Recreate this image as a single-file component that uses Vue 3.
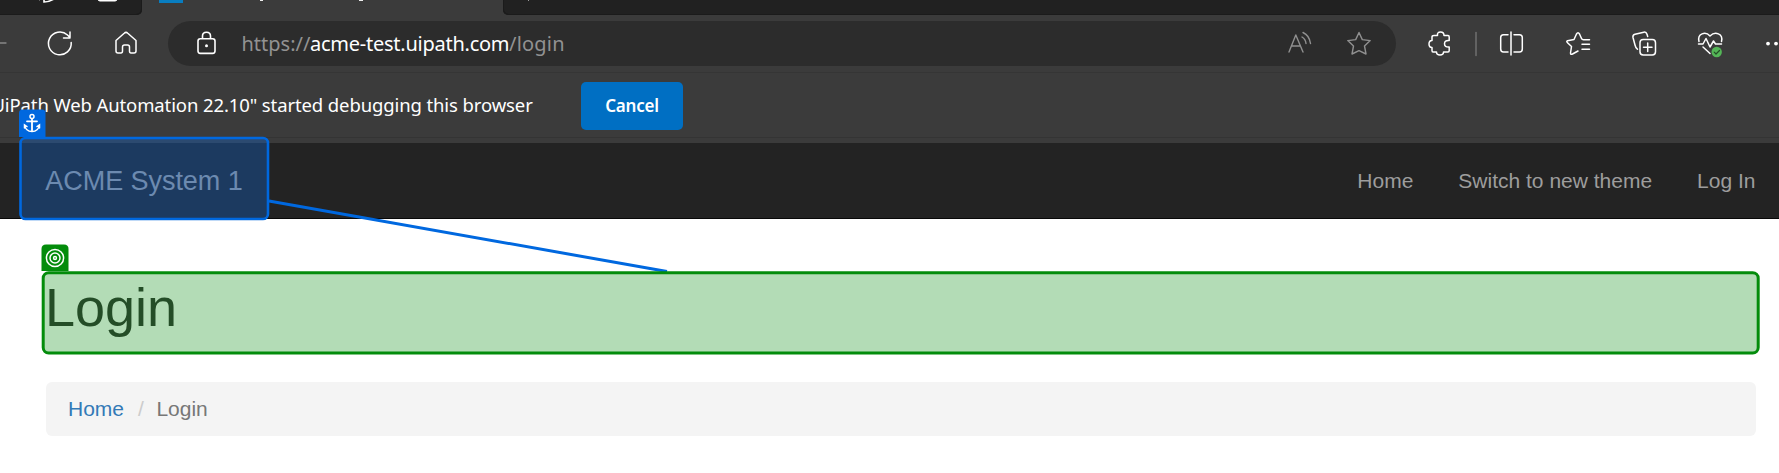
<script setup>
const links = ['Home', 'Switch to new theme', 'Log In']
</script>

<template>
  <div class="screen">
    <header class="chrome">
      <div class="tabs">
        <div class="tabs-left">
          <svg width="142" height="15" viewBox="0 0 142 15">
            <path d="M44 0V2Q49 2 54-1M39-1l1 1" fill="none" stroke="#fff" stroke-width="1.6" />
            <path d="M98-1Q98 1 100 1H115Q117 1 117-1" fill="#fff" stroke="#fff" />
          </svg>
        </div>
        <div class="tab-active">
          <span class="favicon"></span>
          <svg class="tab-title" width="180" height="4" viewBox="183 0 180 4">
            <path d="M260 .5H263M359 .5H365" fill="none" stroke="#eee" stroke-width="1" />
          </svg>
        </div>
        <div class="tabs-right">
          <svg width="60" height="4" viewBox="503 0 60 4"><path d="M528.500 0V1" stroke="#999" /></svg>
        </div>
      </div>
      <div class="toolbar">
        <svg class="tools" width="168" height="57" viewBox="0 15 168 57" fill="none" stroke="#fff" stroke-width="1.5" stroke-linecap="round" stroke-linejoin="round">
          <path d="M-3 43H6" stroke="#888" stroke-width="1.300" />
          <path d="M71.200 42.500A11.400 11.400 0 1 1 67.500 35L70 37.500M70 32V38H63.500" />
          <path d="M116 40.500L124.200 33.200Q126 31.500 127.800 33.200L136 40.500V51Q136 53 134 53H131Q129.500 53 129.500 51V47Q129.500 45 127.500 45H124.500Q122.500 45 122.500 47V51Q122.500 53 121 53H118Q116 53 116 51Z" />
        </svg>
        <div class="address">
          <svg class="lock" width="20" height="24" viewBox="0 0 20 24" fill="none" stroke="#fff" stroke-width="1.6">
            <rect x="2" y="7.800" width="17" height="14.600" rx="2.300" />
            <path d="M6.500 8V5Q6.500 1.300 10.500 1.300T14.500 5V8" /><circle cx="10.500" cy="14.800" r="1.500" fill="#fff" stroke="none" />
          </svg>
          <div class="url"><span class="scheme">https://</span><span class="host">acme-test.uipath.com</span><span class="path">/login</span></div>
          <svg class="address-tools" width="90" height="45" viewBox="1285 21 90 45" fill="none" stroke="#909090" stroke-width="1.400" stroke-linecap="round" stroke-linejoin="round">
            <path d="M1289 52L1295.800 35L1303 52M1291.500 46H1300.500M1302 37Q1305.500 39 1306 43.500M1303 32.500Q1309.500 35.500 1310.500 43.500" />
            <path d="M1359 32.500L1362.300 39.600L1370.200 40.600L1364.500 46L1366 54L1359 50.600L1352 54L1353.500 46L1347.800 40.600L1355.700 39.600Z" />
          </svg>
        </div>
        <svg class="actions" width="383" height="57" viewBox="1396 15 383 57" fill="none" stroke="#fff" stroke-width="1.500" stroke-linecap="round" stroke-linejoin="round">
          <path d="M1434 35.500H1437.500Q1437 32 1440.500 32T1444 35.500H1448Q1449.200 35.500 1449.200 37V40.500Q1444.500 40 1444.500 43.700T1449.200 47V50.500Q1449.200 52 1448 52H1443.500Q1443.500 55 1440 55T1436.500 52H1433Q1432 52 1432 50.500V47.500Q1429 47.500 1429 44T1432 40.500V37Q1432 35.500 1434 35.500Z" />
          <path d="M1476 32.500V55.500" stroke="#707070" />
          <path d="M1508 34.700H1503.500Q1500.700 34.700 1500.700 37.500V49Q1500.700 52 1503.500 52H1508M1514 34.700H1519.500Q1522.300 34.700 1522.300 37.500V49Q1522.300 52 1519.500 52H1514M1511 32V55" />
          <path d="M1589.500 39.700H1583.500Q1582 39.700 1581.500 38.500L1579.500 34Q1578 31.500 1576.500 34L1574 39.500L1567.500 40.700Q1566 41.500 1567.500 42.700L1571.500 46.500L1570.500 53Q1570.500 55 1572.500 54L1578 51M1582 44.300H1589.500M1582 49.200H1589.500" />
          <rect x="1640" y="39.500" width="15.500" height="15.500" rx="3.200" /><path d="M1647.700 43V51.500M1643.500 47.300H1652M1647.700 36.500L1647 34.200Q1646.200 31.700 1643.800 32.200L1635 34.300Q1632.500 35 1633 37.500L1635 45Q1635.800 48.500 1637.500 49.300" />
          <path d="M1699 41.500C1697 33.500 1705.500 31 1710 36C1715 31 1723.500 33.500 1721.500 41.500M1698.500 44H1703L1706 38.500L1710 47L1713.500 41L1715.500 44H1721.500M1703 47L1710 53.500" />
          <circle cx="1716.700" cy="52" r="5.200" fill="#54b657" stroke="none" /><path d="M1714.200 52.200L1716 54L1719.500 50.500" stroke="#244e26" stroke-width="1.200" />
          <g fill="#fff" stroke="none"><circle cx="1768" cy="43.600" r="1.900" /><circle cx="1776" cy="43.600" r="1.900" /></g>
        </svg>
      </div>
      <div class="infobar">
        <div class="message">"UiPath Web Automation 22.10" started debugging this browser</div>
        <button class="cancel">Cancel</button>
      </div>
      <div class="chrome-edge"></div>
    </header>

    <nav class="navbar">
      <a class="brand">ACME System 1</a>
      <div class="links"><a v-for="link in links" :key="link">{{ link }}</a></div>
    </nav>

    <main>
      <h1>Login</h1>
      <div class="breadcrumb"><a>Home</a><span class="slash">/</span><span class="current">Login</span></div>
    </main>

    <svg class="highlights" width="1779" height="473" viewBox="0 0 1779 473">
      <path d="M19 137V113Q19 109.500 22.500 109.500H42Q45.500 109.500 45.500 113V137Z" fill="#0068df" />
      <g fill="none" stroke="#fff" stroke-width="1.500" stroke-linecap="round">
        <circle cx="32" cy="116.500" r="2" /><path d="M32 119V131M27 121.300H37" stroke-width="1.800" /><path d="M24.800 125Q25.500 131.500 32 131.500T39.200 125M24.500 128V124.800L27 126.500M39.500 128V124.800L37 126.500" />
      </g>
      <rect x="20.500" y="138" width="247.500" height="81" rx="5" fill="#1068d5" fill-opacity=".35" stroke="#0068df" stroke-width="2.600" />
      <path d="M269 201L667 271.500" stroke="#0068df" stroke-width="3" />
      <path d="M41.500 271V249Q41.500 244.500 46 244.500H64Q68.500 244.500 68.500 249V271Z" fill="#038c0b" />
      <g fill="none" stroke="#fff" stroke-width="1.500"><circle cx="55" cy="258" r="8.600" /><circle cx="55" cy="258" r="5" /><circle cx="55" cy="258" r="2.200" fill="#fff" stroke="none" /><circle cx="55" cy="258" r=".7" fill="#038c0b" stroke="none" /></g>
      <rect x="43.200" y="272.800" width="1715" height="80.200" rx="5.500" fill="#048c0c" fill-opacity=".3" stroke="#038c0b" stroke-width="3" />
    </svg>
  </div>
</template>

<style>
body { margin: 0; overflow: hidden; }
</style>

<style scoped>
.screen { position: relative; width: 1779px; height: 473px; overflow: hidden; background: #fff; font-family: "Liberation Sans", Arial, sans-serif; }
.screen svg { display: block; flex: none; }
.chrome { height: 143px; background: #3b3b3b; font-family: "Noto Sans", sans-serif; }
.tabs { height: 15px; display: flex; background: #3b3b3b; }
.tabs-left { width: 142px; background: #212121; border-bottom-right-radius: 5px; overflow: hidden; box-shadow: inset -1px -1px #1b1b1b; }
.tab-active { width: 361px; display: flex; }
.favicon { box-sizing: border-box; width: 24px; height: 3px; margin-left: 17px; border: 3px solid #087dc0; border-top: 0; }
.tabs-right { flex: 1; background: #212121; border-bottom-left-radius: 5px; box-shadow: inset 1px -1px #1b1b1b; }
.toolbar { height: 58px; display: flex; box-sizing: border-box; border-bottom: 1px solid #353535; }
.address { width: 1228px; height: 45px; margin-top: 6px; display: flex; align-items: center; border-radius: 23px; background: #2c2c2c; }
.lock { margin-left: 28px; margin-top: -1px; }
.url { width: 330px; margin: 1px 0 0 25.5px; display: flex; font-size: 20px; line-height: 30px; white-space: nowrap; color: #929292; }
.scheme { width: 68.5px; }
.host { width: 199px; color: #fff; letter-spacing: -.25px; }
.path { letter-spacing: .2px; }
.address-tools { margin-left: auto; margin-right: 21px; }
.actions { margin-left: auto; }
.infobar { height: 64px; display: flex; align-items: center; }
.message { width: 597px; margin: -2px 0 0 -16px; flex: none; white-space: nowrap; color: #fff; font-size: 18.5px; letter-spacing: -.11px; }
.cancel { width: 102px; height: 48px; margin: 2px 0 0; padding: 0 0 2px; border: 0; border-radius: 5px; background: #006fc3; color: #fff; font: 600 17px "Noto Sans", sans-serif; letter-spacing: -.2px; }
.chrome-edge { height: 6px; box-sizing: border-box; border-top: 1px solid #343434; }
.navbar { height: 76px; box-sizing: border-box; padding: 0 23.5px 0 45.3px; display: flex; align-items: center; justify-content: space-between; background: #232323; border-bottom: 1px solid #080808; color: #9d9d9d; }
.brand { margin-top: 1px; font-size: 27px; letter-spacing: -.05px; }
.links { display: flex; gap: 45px; font-size: 21px; }
main { padding: 54px 23px 0 46px; }
h1 { height: 80px; margin: 0 0 29px -1px; font-weight: 400; font-size: 54px; line-height: 68px; color: #333; }
.breadcrumb { height: 54px; display: flex; align-items: center; padding-left: 22px; border-radius: 6px; background: #f4f4f4; color: #777; font-size: 21px; }
.breadcrumb a { color: #337ab7; }
.slash { margin: 0 13px 0 14px; color: #ccc; }
.current { margin-left: -.5px; }
.highlights { position: absolute; left: 0; top: 0; }
</style>
